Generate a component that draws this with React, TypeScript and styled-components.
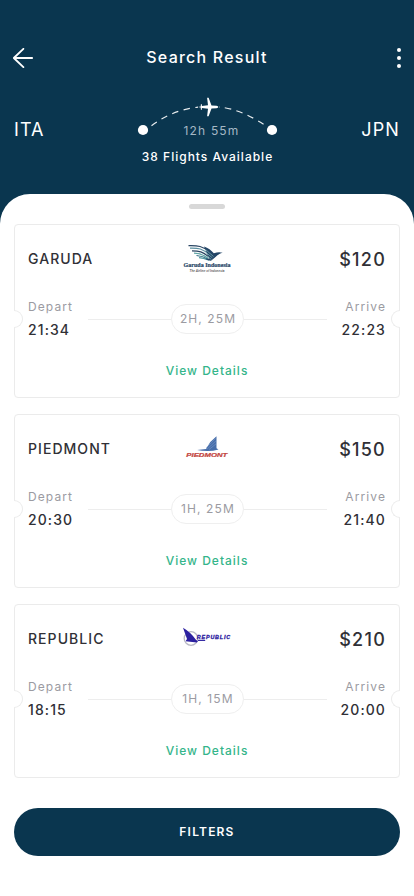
import React from "react";
import styled, { createGlobalStyle } from "styled-components";

const GlobalStyle = createGlobalStyle`
  * { box-sizing: border-box; }
  body { margin: 0; background: #fff; font-family: Inter, "Liberation Sans", sans-serif; }
  button { font: inherit; border: 0; padding: 0; background: none; cursor: pointer; }
`;

const Screen = styled.main`
  width: 414px;
  height: 896px;
  display: flex;
  flex-direction: column;
  overflow: hidden;
  background: #0a364f;
`;

const Header = styled.header`
  height: 194px;
  padding-top: 44px;
  color: #fff;
`;

const TopBar = styled.div`
  display: grid;
  grid-template-columns: 20px 1fr 20px;
  align-items: center;
  height: 28px;
  padding: 0 13px;
`;

const IconButton = styled.button`
  display: flex;
  justify-content: flex-end;
  color: #fff;
`;

const Title = styled.h1`
  margin: 0;
  text-align: center;
  font-size: 16px;
  line-height: 26px;
  padding-bottom: 2px;
  font-weight: 500;
  letter-spacing: 1.22px;
`;

const Route = styled.div`
  display: grid;
  grid-template-columns: 80px 1fr 80px;
  padding: 22px 14px 0;
`;

const Airport = styled.div<{ $end?: boolean }>`
  padding-top: 23px;
  font-size: 18px;
  line-height: 25px;
  letter-spacing: 1.1px;
  text-align: ${(p) => (p.$end ? "right" : "left")};
`;

const Journey = styled.div`
  display: flex;
  flex-direction: column;
  align-items: center;
`;

const Arc = styled.svg`
  display: block;
  height: 44px;
  margin-bottom: -15px;
`;

const Duration = styled.div`
  padding-left: 9px;
  font-size: 12px;
  line-height: 16px;
  letter-spacing: 1.2px;
  color: #a5b8c5;
`;

const Available = styled.div`
  margin-top: 10px;
  padding-left: 1px;
  font-size: 12px;
  line-height: 16px;
  font-weight: 500;
  letter-spacing: 1px;
`;

const Sheet = styled.section`
  flex: 1;
  display: flex;
  flex-direction: column;
  padding: 10px 14px 0;
  border-radius: 30px 30px 0 0;
  background: #fff;
`;

const Grip = styled.div`
  align-self: center;
  width: 36px;
  height: 5px;
  border-radius: 2.5px;
  background: #d8d8d8;
`;

const CardList = styled.div`
  display: grid;
  grid-template-columns: minmax(0, 1fr);
  gap: 16px;
  margin-top: 15px;
`;

const Card = styled.article`
  position: relative;
  height: 174px;
  padding: 13px 13px 0;
  border: 1px solid #ebebeb;
  border-radius: 4px;
`;

const Notch = styled.i<{ $side: "left" | "right" }>`
  position: absolute;
  top: 85px;
  ${(p) => p.$side}: -1px;
  width: 9px;
  height: 18px;
  background: #fff;
  border: 1px solid #ebebeb;
  border-${(p) => p.$side}: 0;
  border-radius: ${(p) => (p.$side === "left" ? "0 9px 9px 0" : "9px 0 0 9px")};
`;

const CardTop = styled.div`
  display: grid;
  grid-template-columns: 1fr 62px 1fr;
  align-items: center;
  height: 42px;
`;

const Airline = styled.div`
  font-size: 14px;
  line-height: 20px;
  letter-spacing: 1.05px;
  font-weight: 450;
  color: #303036;
`;

const Price = styled.div`
  text-align: right;
  font-size: 18px;
  line-height: 24px;
  padding-top: 1px;
  font-weight: 500;
  letter-spacing: 1.25px;
  color: #303036;
`;

const Logo = styled.svg`
  display: block;
  width: 62px;
  height: 42px;
`;

const Times = styled.div`
  display: flex;
  align-items: center;
  height: 44px;
  margin-top: 18px;
`;

const Stop = styled.div<{ $end?: boolean }>`
  flex: 0 0 ${(p) => (p.$end ? "59px" : "60px")};
  text-align: ${(p) => (p.$end ? "right" : "left")};
`;

const Label = styled.div`
  font-size: 12px;
  line-height: 20px;
  letter-spacing: 1.1px;
  color: #9b9ba2;
`;

const Time = styled.div`
  font-size: 14px;
  line-height: 26px;
  font-weight: 500;
  letter-spacing: 1.1px;
  color: #303036;
`;

const Track = styled.div`
  display: flex;
  flex: 1;
  align-items: center;
  margin-bottom: 2px;
  &::before, &::after {
    content: "";
    flex: 1;
    height: 1px;
    background: #ededed;
  }
`;

const Pill = styled.div`
  width: 73px;
  height: 30px;
  border: 1px solid #efefef;
  border-radius: 15px;
  padding-left: 1px;
  text-align: center;
  font-size: 12px;
  line-height: 27px;
  letter-spacing: 1.1px;
  white-space: nowrap;
  color: #9b9ba2;
`;

const Details = styled.button`
  && {
    display: block;
    margin: 19px auto 0;
    font-size: 12px;
    line-height: 20px;
    font-weight: 500;
    letter-spacing: 1px;
    color: #34b58a;
  }
`;

const Filters = styled.button`
  && {
    height: 48px;
    margin-top: 30px;
    border-radius: 24px;
    background: #0a364f;
    color: #fff;
    font-size: 12px;
    font-weight: 600;
    letter-spacing: 1.2px;
    padding-bottom: 1px;
  }
`;

const BackIcon = () => (
  <svg width="20" height="20" viewBox="0 0 20 20" fill="none" stroke="currentColor" strokeWidth="1.8" strokeLinecap="round" strokeLinejoin="round">
    <path d="M19.2 10H.8M10.4.8.8 10l9.6 9.2" />
  </svg>
);

const MoreIcon = () => (
  <svg width="4" height="20" viewBox="0 0 4 20" fill="currentColor">
    <circle cx="2" cy="2" r="2" />
    <circle cx="2" cy="10" r="2" />
    <circle cx="2" cy="18" r="2" />
  </svg>
);

const FlightArc = () => (
  <Arc width="150" viewBox="0 0 150 44">
    <path d="M19.5 31.7Q40 16 66 13.2" fill="none" stroke="#fff" strokeOpacity=".9" strokeWidth="1.2" strokeDasharray="6.5 5.5" />
    <path d="M140 36Q111 15 87 13" fill="none" stroke="#fff" strokeOpacity=".9" strokeWidth="1.2" strokeDasharray="6.5 5.5" strokeDashoffset="2" />
    <circle cx="11" cy="36" r="5.1" fill="#fff" />
    <circle cx="140" cy="36" r="5.1" fill="#fff" />
    <path d="M86.3 13q0-1-1.8-1.3l-5-.3-2.9-7.6h-1.5l.9 7.5-6.1.7v-1.7h-1l-.2 2.2-2.7.5 2.7.5.2 2.2h1V14l6.1.7-.9 7.5h1.5l2.9-7.6 5-.3q1.8-.3 1.8-1.3Z" fill="#fff" />
  </Arc>
);

const GarudaLogo = () => (
  <Logo viewBox="0 0 62 42" aria-label="Garuda Indonesia">
    <g fill="none" strokeWidth="1.2">
      <path d="M12.5 7.7c9-.2 15 .2 20.5 6.3" stroke="#294563" />
      <path d="M14 10.2c8-.2 13 .2 19 6.8" stroke="#5b8fa0" />
      <path d="M16 12.8c7 0 11 .8 16.5 6" stroke="#294563" />
      <path d="M18 15.2c5 0 9 1.2 14 5" stroke="#5fa5a6" />
      <path d="M20.5 17.5c4 .2 7 1 12 4" stroke="#2f6c82" />
      <path d="M23 19.6c4 .3 6 1 10 2.5" stroke="#4f98a1" />
    </g>
    <path d="M28 8.6c4 1.4 7.4 3.8 9.8 6.7 3.5-1.2 6.1-1.4 8.9-.5-4.8 1-6.8 4.2-11.7 8-2.4-.3-4-.9-6-2l4.4-.3Z" fill="#234567" />
    <path d="m29.5 11.5 8 7M30 14.4l6.3 5.4M31 18l4.4 3.5" stroke="#78afb5" strokeWidth=".8" />
    <text x="7.5" y="28.9" textLength="47" lengthAdjust="spacingAndGlyphs" fontFamily="Liberation Serif, serif" fontSize="6" fontWeight="700" fill="#294768" stroke="#294768" strokeWidth=".2">Garuda Indonesia</text>
    <text x="13.5" y="34.4" textLength="35" lengthAdjust="spacingAndGlyphs" fontFamily="Liberation Sans, sans-serif" fontSize="3.8" fontStyle="italic" fontWeight="700" fill="#65615f">The Airline of Indonesia</text>
  </Logo>
);

const PiedmontLogo = () => (
  <Logo viewBox="0 0 62 42" aria-label="Piedmont">
    <path d="M40.5 8.2v12l2 1.4-5.3 1.2q-10 .5-16-.7l8.8-1.2 4.3-6.8Z" fill="#476eaa" />
    <path d="m30 20 9.5-9.6M31.2 21l8.7-8M33 21.5l7-5.6" stroke="#86a3ce" strokeWidth=".5" />
    <text x="10.3" y="28.8" textLength="41" lengthAdjust="spacingAndGlyphs" fontFamily="Liberation Sans, sans-serif" fontSize="5.6" fontStyle="italic" fontWeight="700" fill="#c34742" stroke="#c34742" strokeWidth=".2">PIEDMONT</text>
  </Logo>
);

const RepublicLogo = () => (
  <Logo viewBox="0 0 62 42" aria-label="Republic">
    <circle cx="15" cy="20.5" r="6.8" fill="none" stroke="#b9b9c5" strokeWidth="1.3" />
    <path d="M7 9.8q7 4 12.7 11.6l2.2 1.8-1 1.2-11.4-1.2 1.5-2.2Z" fill="#2c20a0" />
    <text x="20.8" y="20.8" textLength="33.4" fontFamily="Liberation Sans, sans-serif" fontSize="5.4" fontStyle="italic" fontWeight="700" fill="#2c20a0" stroke="#2c20a0" strokeWidth=".3">REPUBLIC</text>
    <path d="M22 22.4h7.2" stroke="#2c20a0" strokeWidth="1.1" />
  </Logo>
);

const flights = [
  { airline: "GARUDA", Mark: GarudaLogo, price: "$120", depart: "21:34", arrive: "22:23", duration: "2H, 25M" },
  { airline: "PIEDMONT", Mark: PiedmontLogo, price: "$150", depart: "20:30", arrive: "21:40", duration: "1H, 25M" },
  { airline: "REPUBLIC", Mark: RepublicLogo, price: "$210", depart: "18:15", arrive: "20:00", duration: "1H, 15M" },
];

export default function App() {
  return (
    <Screen>
      <GlobalStyle />
      <Header>
        <TopBar>
          <IconButton aria-label="Back"><BackIcon /></IconButton>
          <Title>Search Result</Title>
          <IconButton aria-label="More"><MoreIcon /></IconButton>
        </TopBar>
        <Route>
          <Airport>ITA</Airport>
          <Journey>
            <FlightArc />
            <Duration>12h 55m</Duration>
            <Available>38 Flights Available</Available>
          </Journey>
          <Airport $end>JPN</Airport>
        </Route>
      </Header>
      <Sheet>
        <Grip />
        <CardList>
          {flights.map(({ airline, Mark, price, depart, arrive, duration }) => (
            <Card key={airline}>
              <Notch $side="left" />
              <Notch $side="right" />
              <CardTop>
                <Airline>{airline}</Airline>
                <Mark />
                <Price>{price}</Price>
              </CardTop>
              <Times>
                <Stop><Label>Depart</Label><Time>{depart}</Time></Stop>
                <Track><Pill>{duration}</Pill></Track>
                <Stop $end><Label>Arrive</Label><Time>{arrive}</Time></Stop>
              </Times>
              <Details>View Details</Details>
            </Card>
          ))}
        </CardList>
        <Filters>FILTERS</Filters>
      </Sheet>
    </Screen>
  );
}
